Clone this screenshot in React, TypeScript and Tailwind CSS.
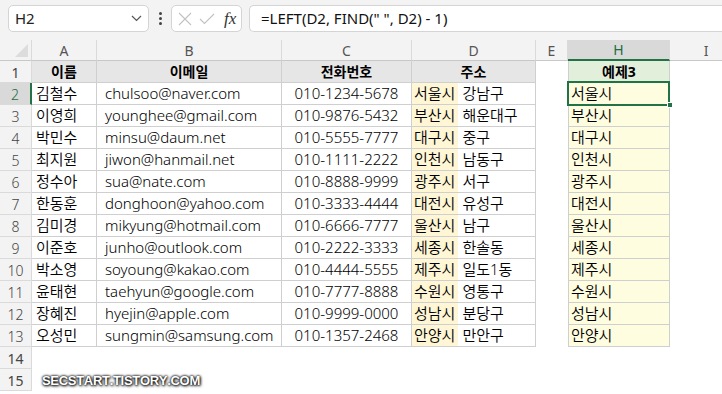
import React from "react";

const data: [string, string, string, string, string, string][] = [
  ["김철수", "chulsoo@naver.com", "010-1234-5678", "서울시", "강남구", "서울시"],
  ["이영희", "younghee@gmail.com", "010-9876-5432", "부산시", "해운대구", "부산시"],
  ["박민수", "minsu@daum.net", "010-5555-7777", "대구시", "중구", "대구시"],
  ["최지원", "jiwon@hanmail.net", "010-1111-2222", "인천시", "남동구", "인천시"],
  ["정수아", "sua@nate.com", "010-8888-9999", "광주시", "서구", "광주시"],
  ["한동훈", "donghoon@yahoo.com", "010-3333-4444", "대전시", "유성구", "대전시"],
  ["김미경", "mikyung@hotmail.com", "010-6666-7777", "울산시", "남구", "울산시"],
  ["이준호", "junho@outlook.com", "010-2222-3333", "세종시", "한솔동", "세종시"],
  ["박소영", "soyoung@kakao.com", "010-4444-5555", "제주시", "일도1동", "제주시"],
  ["윤태현", "taehyun@google.com", "010-7777-8888", "수원시", "영통구", "수원시"],
  ["장혜진", "hyejin@apple.com", "010-9999-0000", "성남시", "분당구", "성남시"],
  ["오성민", "sungmin@samsung.com", "010-1357-2468", "안양시", "만안구", "안양시"],
];

function RowHead({ n, selected }: { n: number; selected?: boolean }) {
  return (
    <div
      className={
        selected
          ? "w-[32px] h-[22px] shrink-0 flex items-center justify-center bg-[#d9d9d9] text-[#1e6c41] border-b border-solid border-[#dadada] border-r-2 border-r-[#217346] text-[14px] pt-[1px]"
          : "w-[32px] h-[22px] shrink-0 flex items-center justify-center bg-[#f3f3f3] text-[#444444] border-b border-r border-solid border-[#dadada] text-[14px] pt-[1px]"
      }
    >
      {n}
    </div>
  );
}

function ColHead({ w, label, selected }: { w: string; label: string; selected?: boolean }) {
  return (
    <div
      className={
        (selected
          ? "bg-[#d9d9d9] text-[#1e6c41] border-b-2 border-b-[#217346] border-r border-r-[#dadada] "
          : "bg-[#f3f3f3] text-[#555555] border-r border-[#dadada] border-b border-b-[#c8c8c8] ") +
        w +
        " h-[21px] shrink-0 flex items-center justify-center text-[14px] border-solid"
      }
    >
      {label}
    </div>
  );
}

export default function App() {
  return (
    <div className="w-[722px] h-[394px] overflow-hidden bg-white relative font-['Noto_Sans','Noto_Sans_CJK_KR',sans-serif] text-black">
      {/* Toolbar */}
      <div className="h-[40px] bg-[#f3f3f3] flex items-start pt-[5px] pl-[8px]">
        <div className="w-[141px] h-[27px] bg-white border border-solid border-[#d4d4d4] rounded-[5px] flex items-center pl-[6px] pr-[5px]">
          <span className="text-[15px] text-[#222222] flex-1">H2</span>
          <svg width="11" height="7" viewBox="0 0 11 7" className="mr-[1px]">
            <path d="M1 1 L5.5 5.5 L10 1" stroke="#555" strokeWidth="1.2" fill="none" />
          </svg>
        </div>
        <div className="w-[22px] h-[27px] flex flex-col items-center justify-center gap-[2px]">
          <span className="w-[3px] h-[3px] rounded-full bg-[#444]" />
          <span className="w-[3px] h-[3px] rounded-full bg-[#444]" />
          <span className="w-[3px] h-[3px] rounded-full bg-[#444]" />
        </div>
        <div className="w-[71px] h-[27px] bg-white border border-solid border-[#d4d4d4] rounded-[5px] flex items-center pl-[6px]">
          <svg width="14" height="14" viewBox="0 0 14 14">
            <path d="M1 1 L13 13 M13 1 L1 13" stroke="#c2c2c2" strokeWidth="1.1" fill="none" />
          </svg>
          <svg width="16" height="12" viewBox="0 0 16 12" className="ml-[7px]">
            <path d="M1 6 L5.5 10.5 L15 1" stroke="#c2c2c2" strokeWidth="1.1" fill="none" />
          </svg>
          <span className="ml-[9px] font-['Liberation_Serif',serif] italic text-[17px] text-[#333] leading-none">fx</span>
        </div>
        <div className="ml-[7px] flex-1 h-[27px] bg-white border border-solid border-r-0 border-[#d4d4d4] rounded-l-[5px] flex items-center pl-[11px]">
          <span className="text-[15px] text-[#111]">=LEFT(D2, FIND(" ", D2) - 1)</span>
        </div>
      </div>

      {/* Column headers */}
      <div className="flex h-[21px]">
        <div className="w-[32px] h-[21px] shrink-0 bg-[#f3f3f3] border-r border-solid border-[#dadada] border-b border-b-[#c8c8c8] flex items-end justify-end pr-[3px] pb-[3px]">
          <svg width="13" height="13" viewBox="0 0 13 13">
            <path d="M13 0 L13 13 L0 13 Z" fill="#dcdcdc" />
          </svg>
        </div>
        <ColHead w="w-[65px]" label="A" />
        <ColHead w="w-[185px]" label="B" />
        <ColHead w="w-[130px]" label="C" />
        <ColHead w="w-[124px]" label="D" />
        <ColHead w="w-[32px]" label="E" />
        <ColHead w="w-[102px]" label="H" selected />
        <div className="flex-1 h-[21px] bg-[#f3f3f3] border-b border-solid border-[#c8c8c8] flex items-center text-[14px] text-[#555555]">
          <span className="w-[72px] text-center">I</span>
        </div>
      </div>

      {/* Row 1 */}
      <div className="flex h-[22px]">
        <RowHead n={1} />
        <div className="w-[65px] shrink-0 border-r border-b border-solid border-[#cfcfcf] bg-[#e7e6e6] flex items-center justify-center font-bold text-[14px]">이름</div>
        <div className="w-[185px] shrink-0 border-r border-b border-solid border-[#cfcfcf] bg-[#e7e6e6] flex items-center justify-center font-bold text-[14px]">이메일</div>
        <div className="w-[130px] shrink-0 border-r border-b border-solid border-[#cfcfcf] bg-[#e7e6e6] flex items-center justify-center font-bold text-[14px]">전화번호</div>
        <div className="w-[124px] shrink-0 border-r border-b border-solid border-[#cfcfcf] bg-[#e7e6e6] flex items-center justify-center font-bold text-[14px]">주소</div>
        <div className="w-[32px] shrink-0" />
        <div className="w-[102px] shrink-0 border-x border-b border-solid border-[#cfcfcf] bg-[#e2efda] flex items-center justify-center font-bold text-[14px]">예제3</div>
        <div className="flex-1" />
      </div>

      {data.map((r, i) => (
        <div key={i} className="flex h-[22px] text-[15px] font-[350]">
          <RowHead n={i + 2} selected={i === 0} />
          <div className="w-[65px] shrink-0 border-r border-b border-solid border-[#cfcfcf] flex items-center pl-[4px] whitespace-nowrap">{r[0]}</div>
          <div className="w-[185px] shrink-0 border-r border-b border-solid border-[#cfcfcf] flex items-center pl-[8px] whitespace-nowrap">{r[1]}</div>
          <div className="w-[130px] shrink-0 border-r border-b border-solid border-[#cfcfcf] flex items-center justify-center whitespace-nowrap">{r[2]}</div>
          <div className="w-[124px] shrink-0 border-r border-b border-solid border-[#cfcfcf] flex items-stretch whitespace-nowrap">
            <span className="bg-[#fff6d6] pl-[2px] pr-[3px] flex items-center">{r[3]}</span>
            <span className="flex items-center pl-[4px]">{r[4]}</span>
          </div>
          <div className="w-[32px] shrink-0" />
          <div className="relative w-[102px] shrink-0 border-x border-b border-solid border-[#cfcfcf] bg-[#fffde0] flex items-center pl-[2px] whitespace-nowrap">
            {r[5]}
            {i === 0 && (
              <>
                <div className="absolute z-10 left-[-2px] top-[-2px] right-[-1px] bottom-[-2px] border-2 border-solid border-[#217346]" />
                <div className="absolute z-20 right-[-4px] bottom-[-4px] w-[6px] h-[6px] bg-[#217346] border border-solid border-white" />
              </>
            )}
          </div>
          <div className="flex-1" />
        </div>
      ))}

      {[14, 15].map((n) => (
        <div key={n} className="flex h-[22px]">
          <RowHead n={n} />
          <div className="flex-1" />
        </div>
      ))}

      {/* Watermark */}
      <div className="absolute left-[42px] top-[371px] font-['Liberation_Sans',sans-serif] font-bold text-[13px] tracking-[-0.3px] [font-kerning:none] text-white [text-shadow:0_0_2px_rgba(0,0,0,1),0_0_3px_rgba(0,0,0,0.9),1px_1px_3px_rgba(0,0,0,0.9)]">
        SECSTART.TISTORY.COM
      </div>
    </div>
  );
}
